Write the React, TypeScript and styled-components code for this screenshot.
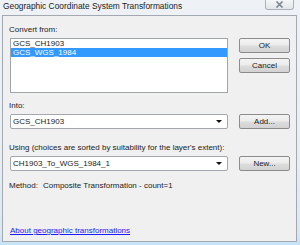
import React from "react";
import styled, { createGlobalStyle } from "styled-components";

const Global = createGlobalStyle`
  html, body { margin: 0; padding: 0; }
  body { width: 300px; height: 245px; overflow: hidden; background: #e6edf3; }
`;

const Window = styled.div`
  width: 300px;
  height: 245px;
  display: flex;
  flex-direction: column;
  background: linear-gradient(to bottom, #eef2f6 0%, #e9eef3 60%, #dbe8f3 94%, #c6e2f6 100%);
  font-family: "Liberation Sans", Arial, sans-serif;
  box-sizing: border-box;
`;

const TitleBar = styled.div`
  height: 15px;
  display: flex;
  align-items: flex-start;
  flex-shrink: 0;
`;

const Title = styled.div`
  padding: 1px 0 0 3px;
  font-size: 8.4px;
  line-height: 11px;
  color: #1c1c1c;
  white-space: nowrap;
`;

const CloseButton = styled.div`
  margin-left: auto;
  margin-right: 6px;
  width: 29px;
  height: 10px;
  box-sizing: border-box;
  border: 1px solid #a9b0b8;
  border-top: none;
  border-radius: 0 0 3px 3px;
  background: linear-gradient(to bottom, #f4f6f8, #e2e6ea);
  display: flex;
  align-items: center;
  justify-content: center;
`;

const Client = styled.div`
  flex: 1;
  margin: 0 3px 3px 2px;
  border: 1px solid #a2a9b1;
  background: #f0f0f0;
  display: flex;
  flex-direction: column;
  padding: 9px 0 5px 6px;
  font-size: 8px;
  color: #222;
`;

const Label = styled.div<{ $mt?: number }>`
  margin-top: ${(p) => p.$mt ?? 0}px;
  height: 10px;
  line-height: 10px;
  margin-bottom: 3px;
  white-space: nowrap;
`;

const Row = styled.div`
  display: flex;
  align-items: flex-start;
`;

const ListBox = styled.div`
  margin-left: 1px;
  width: 218px;
  height: 55px;
  box-sizing: border-box;
  border: 1px solid #9fa5ad;
  background: #fff;
`;

const ListItem = styled.div<{ $selected?: boolean }>`
  height: 9px;
  line-height: 9px;
  padding-left: 2px;
  background: ${(p) => (p.$selected ? "#3399ff" : "transparent")};
  color: ${(p) => (p.$selected ? "#fff" : "#222")};
`;

const ButtonColumn = styled.div`
  display: flex;
  flex-direction: column;
  gap: 5px;
  margin-left: 11px;
`;

const Button = styled.div`
  width: 51px;
  height: 15px;
  box-sizing: border-box;
  border: 1px solid #8c8c8c;
  border-radius: 2px;
  background: linear-gradient(to bottom, #f4f4f4 0%, #ebebeb 48%, #dddddd 52%, #d2d2d2 100%);
  display: flex;
  align-items: center;
  justify-content: center;
  color: #222;
  font-size: 8px;
`;

const Combo = styled.div`
  margin-left: 1px;
  width: 218px;
  height: 15px;
  box-sizing: border-box;
  border: 1px solid #a3a8ae;
  border-radius: 2px;
  background: #fff;
  display: flex;
  align-items: center;
  padding: 0 5px 0 2px;
  margin-right: 11px;
`;

const ComboText = styled.div`
  flex: 1;
  white-space: nowrap;
`;

const Arrow = styled.div`
  width: 0;
  height: 0;
  border-left: 3px solid transparent;
  border-right: 3px solid transparent;
  border-top: 3px solid #111;
`;

const MethodRow = styled.div`
  margin-top: 10px;
  height: 10px;
  line-height: 10px;
  display: flex;
  white-space: nowrap;
`;

const MethodKey = styled.span`
  width: 34px;
`;

const Link = styled.a`
  margin-top: auto;
  margin-left: 1px;
  height: 10px;
  line-height: 10px;
  color: #1a1aff;
  text-decoration: underline;
  white-space: nowrap;
  align-self: flex-start;
`;

export default function App() {
  return (
    <>
      <Global />
      <Window>
        <TitleBar>
          <Title>Geographic Coordinate System Transformations</Title>
          <CloseButton>
            <svg width="9" height="7" viewBox="0 0 9 7">
              <path d="M1.5 0.5 L7.5 6.5 M7.5 0.5 L1.5 6.5" stroke="#7d848c" strokeWidth="1.6" />
            </svg>
          </CloseButton>
        </TitleBar>
        <Client>
          <Label>Convert from:</Label>
          <Row>
            <ListBox>
              <ListItem>GCS_CH1903</ListItem>
              <ListItem $selected>GCS_WGS_1984</ListItem>
            </ListBox>
            <ButtonColumn>
              <Button>OK</Button>
              <Button>Cancel</Button>
            </ButtonColumn>
          </Row>
          <Label $mt={8}>Into:</Label>
          <Row>
            <Combo>
              <ComboText>GCS_CH1903</ComboText>
              <Arrow />
            </Combo>
            <Button>Add...</Button>
          </Row>
          <Label $mt={14}>Using (choices are sorted by suitability for the layer's extent):</Label>
          <Row>
            <Combo>
              <ComboText>CH1903_To_WGS_1984_1</ComboText>
              <Arrow />
            </Combo>
            <Button>New...</Button>
          </Row>
          <MethodRow>
            <MethodKey>Method:</MethodKey>
            <span>Composite Transformation - count=1</span>
          </MethodRow>
          <Link href="#">About geographic transformations</Link>
        </Client>
      </Window>
    </>
  );
}
